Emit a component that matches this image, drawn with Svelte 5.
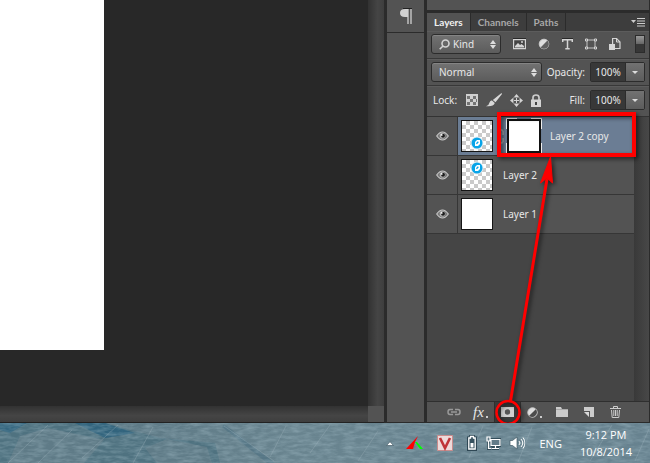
<script>
  let kind = $state('Kind');
  let mode = $state('Normal');
  let opacity = $state('100%');
  let fill = $state('100%');
  const tabs = ['Layers', 'Channels', 'Paths'];
  const layers = [
    { name: 'Layer 2 copy', art: 22, mask: true },
    { name: 'Layer 2', art: 8, mask: false },
    { name: 'Layer 1', art: null, mask: false }
  ];
</script>

<div class="desktop">
  <main class="app">
    <section class="document" aria-label="Document">
      <div class="view">
        <div class="pasteboard"><div class="paper"></div></div>
        <div class="vbar"></div>
      </div>
      <div class="bottom"><div class="hbar"></div><div class="corner"></div></div>
    </section>

    <aside class="dock">
      <button class="paragraph" aria-label="Paragraph">
        <svg width="12" height="17" viewBox="0 0 12 17"><path d="M11 1v15M8 1v15" stroke="#c8c8c8" stroke-width="1.4" /><path d="M12 1H5Q0 1 0 5t5 4h3V1z" fill="#d2d2d2" /><path d="M3 .5h9" stroke="#222" /></svg>
      </button>
    </aside>

    <section class="panel">
      <div class="above"></div>
      <div class="tabs" role="tablist">
        {#each tabs as tab, i}
          <button role="tab" aria-selected={i === 0} class:active={i === 0}>{tab}</button>
        {/each}
        <button class="menu" aria-label="Panel menu">
          <svg width="14" height="9" viewBox="0 0 14 9"><path d="M0 2h5L2.500 5z" fill="#ccc" /><path d="M6 .5h8M6 3h8M6 5.500h8M6 8h8" stroke="#ccc" /></svg>
        </button>
      </div>

      <div class="row filter">
        <div class="pick kind">
          <svg class="search" width="11" height="11" viewBox="0 0 11 11" fill="none" stroke="#d4d4d4" stroke-width="1.600"><circle cx="6.500" cy="4.500" r="3.500" /><path d="M4 7 .7 10.300" /></svg>
          <select bind:value={kind} aria-label="Filter type"><option>Kind</option><option>Name</option></select>
          <svg class="updown" width="6" height="9" viewBox="0 0 6 9"><path d="M0 4h6L3 0zM0 5h6L3 9z" fill="#ddd" /></svg>
        </div>
        <div class="filters">
          <button aria-label="Pixel layers"><svg width="13" height="12" viewBox="0 0 13 12"><path d="M0 .5h13" stroke="#292929" /><path d="M.6 1.600h11.800v9H.6z" fill="#444" stroke="#d4d4d4" stroke-width="1.200" /><path d="M2 9.500V8l3-3 2 2 1.500-1L11 8v1.500z" fill="#d4d4d4" /><circle cx="9" cy="4" r="1" fill="#d4d4d4" /></svg></button>
          <button aria-label="Adjustment layers"><svg width="12" height="12" viewBox="0 0 12 12"><circle cx="6" cy="6" r="4.800" fill="#dedede" stroke="#ccc" /><path d="M2.600 9.400 9.400 2.600A4.800 4.800 0 0 1 2.600 9.400z" fill="#606060" /></svg></button>
          <button aria-label="Type layers"><svg width="11" height="12" viewBox="0 0 11 12"><path d="M.7 4V1.700h9.600V4M5.500 1.700v9M3.300 10.800h4.400" stroke="#d4d4d4" stroke-width="1.500" fill="none" /><path d="M0 .5h11" stroke="#292929" /></svg></button>
          <button aria-label="Shape layers"><svg width="12" height="12" viewBox="0 0 12 12"><path d="M2 2h8v8H2z" fill="none" stroke="#c4c4c4" /><path d="M.5 1h2v2h-2zM9.500 1h2v2h-2zM.5 9h2v2h-2zM9.500 9h2v2h-2z" fill="#555" stroke="#d4d4d4" /></svg></button>
          <button aria-label="Smart objects"><svg width="12" height="13" viewBox="0 0 12 13"><path d="M3.600 8V1.500h4L11 5v6.500H6" fill="none" stroke="#d4d4d4" stroke-width="1.200" /><path d="M7.500 1.500V5H11" fill="none" stroke="#d4d4d4" /><path d="M0 7h6v6H0z" fill="#d4d4d4" /></svg></button>
        </div>
        <button class="toggle" aria-label="Layer filtering"><span></span></button>
      </div>

      <div class="row blend">
        <div class="pick mode">
          <select bind:value={mode} aria-label="Blend mode"><option>Normal</option><option>Multiply</option></select>
          <svg class="updown" width="6" height="9" viewBox="0 0 6 9"><path d="M0 4h6L3 0zM0 5h6L3 9z" fill="#ddd" /></svg>
        </div>
        <label for="opacity">Opacity:</label>
        <div class="amount"><input id="opacity" bind:value={opacity} /><button aria-label="Opacity slider"><svg width="6" height="3" viewBox="0 0 6 3"><path d="M0 0h6L3 3z" fill="#ddd" /></svg></button></div>
      </div>

      <div class="row lock">
        <span>Lock:</span>
        <div class="locks">
          <button aria-label="Lock transparent pixels"><svg width="12" height="12" viewBox="0 0 12 12"><path d="M0 0h12v12H0z" fill="#d0d0d0" /><path d="M1 2h3v3H1zM7 2h3v3H7zM4 5h3v3H4zM1 8h3v3H1zM7 8h3v3H7zM10 5h1v3h-1z" fill="#747474" /></svg></button>
          <button aria-label="Lock image pixels"><svg width="16" height="14" viewBox="0 0 16 14"><path d="M15.500 0 16 1 9.500 9.200 6.800 7zM6 7.500 8.800 10Q7.500 14 0 13.200 3 12.500 3.500 9.500 4.500 7 6 7.500z" fill="#d8d8d8" /></svg></button>
          <button aria-label="Lock position"><svg width="13" height="13" viewBox="0 0 13 13"><path d="M6.500 1v11M1 6.500h11" stroke="#d4d4d4" /><path d="M3.500 3.500h6v6h-6z" fill="none" stroke="#8d8d8d" /><path d="M6.500 0 9 3H4zM6.500 13 4 10h5zM0 6.500 3 4v5zM13 6.500 10 9V4z" fill="#d4d4d4" /></svg></button>
          <button aria-label="Lock all"><svg width="10" height="13" viewBox="0 0 10 13"><path d="M2 6V3.500Q2 1 5 1t3 2.500V6" fill="none" stroke="#ccc" stroke-width="1.700" /><path d="M0 5.500h10V13H0z" fill="#d4d4d4" /><path d="M4 8h2v3H4z" fill="#444" /></svg></button>
        </div>
        <label for="fill">Fill:</label>
        <div class="amount"><input id="fill" bind:value={fill} /><button aria-label="Fill slider"><svg width="6" height="3" viewBox="0 0 6 3"><path d="M0 0h6L3 3z" fill="#ddd" /></svg></button></div>
      </div>

      <div class="stack">
        <ul>
          {#each layers as layer}
            <li class:selected={layer.mask}>
              <button class="eye" aria-label="Toggle visibility of {layer.name}">
                <svg width="13" height="10" viewBox="0 0 13 10"><path d="M.7 5Q3.500 1 6.500 1t5.800 4Q9.500 9 6.500 9T.7 5z" fill="#777" stroke="#c8c8c8" stroke-width="1.200" /><circle cx="6.500" cy="4.800" r="2.800" fill="#b8b8b8" /><circle cx="7" cy="4.800" r="2" fill="#1c1c1c" /><circle cx="5.700" cy="3.900" r=".9" fill="#fff" /></svg>
              </button>
              <button class="layer">
                <span class="thumb" class:clear={layer.art !== null}>
                  {#if layer.art !== null}
                    <svg width="30" height="30" viewBox="0 0 30 30"><g transform="translate(15 {layer.art})"><circle r="6.500" fill="#e6eef2" /><circle r="5.500" fill="#08a4e8" /><path d="M-2 2V-1L0-3H3V1L1 3H-2z" fill="#fff" /><path d="M-.6.8 1.300-1.200" stroke="#08a4e8" stroke-width="1.300" /></g></svg>
                  {/if}
                </span>
                {#if layer.mask}
                  <svg class="chain" width="9" height="15" viewBox="0 0 9 15" fill="none" stroke="#a7a9ac" stroke-width="1.500"><path d="M2 6V2.500L3 1h3l1 1.500V6M2 9v3.500L3 14h3l1-1.500V9M4.500 4v7" /></svg>
                  <span class="maskframe">
                    <svg width="36" height="36" viewBox="0 0 36 36"><path d="M2 2h32v32H2z" fill="#fff" stroke="#111" stroke-width="2" /><path d="M.5 11V.5H11M25 .5h10.500V11M35.500 25v10.500H25M11 35.500H.5V25" fill="none" stroke="#eee" /></svg>
                  </span>
                {/if}
                <span class="name">{layer.name}</span>
              </button>
            </li>
          {/each}
        </ul>
        <div class="track"></div>
      </div>

      <div class="actions">
        <button aria-label="Link layers"><svg width="14" height="8" viewBox="0 0 14 8" fill="none" stroke="#999" stroke-width="1.500"><path d="M6 1.500H3Q1 1.500 1 4t2 2.500h3M8 1.500h3q2 0 2 2.500t-2 2.500H8M4 4h6" /></svg></button>
        <button class="fx" aria-label="Layer style">fx<i></i></button>
        <button class="on" aria-label="Add layer mask"><svg width="13" height="10" viewBox="0 0 13 10"><path d="M0 0h13v10H0z" fill="#d0d0d0" /><circle cx="6.500" cy="5" r="2.700" fill="#555" /></svg></button>
        <button aria-label="Adjustment layer"><svg width="11" height="11" viewBox="0 0 11 11"><circle cx="5.500" cy="5.500" r="4.700" fill="#dedede" stroke="#ccc" /><path d="M2.200 8.800 8.800 2.200A4.700 4.700 0 0 1 2.200 8.800z" fill="#4c4c4c" /></svg><i></i></button>
        <button aria-label="New group"><svg width="12" height="10" viewBox="0 0 12 10"><path d="M0 0h5l1 2h6v8H0z" fill="#ccc" /><path d="M0 2.500h12" stroke="#aaa" /></svg></button>
        <button aria-label="New layer"><svg width="10" height="10" viewBox="0 0 10 10"><path d="M0 0h10v10H6V4H0z" fill="#ccc" /><path d="M0 5h5v5z" fill="#d8d8d8" /></svg></button>
        <button aria-label="Delete layer"><svg width="11" height="12" viewBox="0 0 11 12" fill="none" stroke="#ccc"><path d="M0 2.500h11M3.500 2V.5h4V2M1.500 4l.7 7.500h6.600L9.500 4M3.800 4v6M5.500 4v6M7.200 4v6" /></svg></button>
      </div>

      <svg class="callout" width="150" height="320" viewBox="0 0 150 320">
        <g fill="none" stroke="#f00" stroke-width="3">
          <path d="M9 9h135v41H9z" stroke-width="4" />
          <circle cx="18" cy="307.500" r="11.500" stroke-width="2.500" />
          <path d="M20.500 296 57 74" />
        </g>
        <path d="M60.500 52 62.500 78 57 73 50.500 78z" fill="#f00" stroke="#f00" />
      </svg>
    </section>
  </main>

  <footer class="taskbar">
    <svg class="scenery" viewBox="0 0 650 40" preserveAspectRatio="none" aria-hidden="true">
      <defs>
        <filter id="ice" x="0" y="0" width="100%" height="100%" color-interpolation-filters="sRGB"><feTurbulence type="fractalNoise" baseFrequency=".09 .3" numOctaves="3" seed="8" /><feColorMatrix values="0 0 0 0 .66  0 0 0 0 .76  0 0 0 0 .8  1.800 0 0 0 -.6" /></filter>
      </defs>
      <path d="M0 0h105l55 15 55 5 5 20H0z" fill="#4f7280" />
      <path d="M0 0h27L10 10 0 7zM75 0h30l30 10-30 5z" fill="#32647d" />
      <path d="M20 13 48 5l56 12-20 23H8zM145 25l22-9 40 8 5 16h-55z" fill="#5f7b87" />
      <path d="M224 1 275 40h-8L222 4z" fill="#577786" />
      <path d="M0 0h650v40H0z" filter="url(#ice)" opacity=".4" />
      <path d="M8 40 48 2M38 40 72 7M82 35 118 2M133 40l20-36M270 34 286 3M310 30l20-28M358 38l20-30M469 35l14-32M518 39l14-35M590 38l22-36M635 38l14-32M224 3l50 35" stroke="#a5b8c1" opacity=".3" />
    </svg>
    <button class="expand" aria-label="Show hidden icons"><svg width="8" height="5" viewBox="0 0 8 5"><path d="M.5 4.500 4 .7l3.500 3.800z" fill="#fff" stroke="#455b67" stroke-width=".7" /></svg></button>
    <button class="paint" aria-label="Graphics tools"><svg width="17" height="14" viewBox="0 0 17 14"><path d="M0 13 12 0 9 6 7 13z" fill="#f00" /><path d="M9 6h2l6 7h-3z" fill="#0f0" /></svg></button>
    <button class="v" aria-label="Keyboard layout"><svg width="16" height="16" viewBox="0 0 16 16"><path d="M.5.5h15v15H.5z" fill="#eedada" stroke="#c98c8c" /><path d="m3 3 5 10 5-10" fill="none" stroke="#c03438" stroke-width="2.600" /></svg></button>
    <button class="battery" aria-label="Battery"><svg width="10" height="16" viewBox="0 0 10 16"><path d="M3 1h4v1.500h2V15H1V2.500h2z" fill="#36515e" stroke="#2f4855" stroke-width="2" /><path d="M3.500 1.500h3V3H8.200v11H1.800V3h1.700z" fill="#36515e" stroke="#fff" stroke-width="1.300" /><path d="M3.500 8h3v4.500h-3z" fill="#fff" /></svg></button>
    <button class="network" aria-label="Network"><svg width="15" height="14" viewBox="0 0 15 14"><path d="M5 3.500h9v6H5zM6 12.500h7M9.500 10v2M2.500 5v7.500h3" fill="none" stroke="#334d5a" stroke-width="3" /><path d="M5 3.500h9v6H5zM6 12.500h7M9.500 10v2M2.500 5v7.500h3M1 1h3v4H1z" fill="#627b88" stroke="#fff" stroke-width="1.200" /></svg></button>
    <button class="sound" aria-label="Volume"><svg width="16" height="14" viewBox="0 0 16 14"><path d="M1 4.500h2.500L8 1v12L3.500 9.500H1z" fill="#fff" stroke="#405965" stroke-width=".7" /><path d="M10 5q2 2 0 4M12 3q3.500 4 0 8M14 1.500q4 5.500 0 11" fill="none" stroke="#fff" /></svg></button>
    <button class="lang">ENG</button>
    <button class="clock"><span>9:12 PM</span><span>10/8/2014</span></button>
  </footer>
</div>

<style>
  :global(body) { margin: 0; }
  .desktop { min-height: 100vh; display: flex; flex-direction: column; font: 10px/14px "Noto Sans", "Open Sans", sans-serif; color: #e8e8e8; }
  .desktop * { box-sizing: border-box; }
  button, input, select { font: inherit; color: inherit; margin: 0; padding: 0; border: 0; background: none; border-radius: 0; }
  button { display: flex; align-items: center; justify-content: center; }
  svg { display: block; flex: none; }
  .app { flex: 1; display: flex; background: #535353; }
  .document { flex: 1; min-width: 0; display: flex; flex-direction: column; border-bottom: 1px solid #222; }
  .view { flex: 1; display: flex; }
  .pasteboard { flex: 1; background: #282828; }
  .paper { width: 104px; height: 350px; background: #fff; }
  .vbar { width: 16px; background: linear-gradient(90deg, #323232, #454545 60%, #3e3e3e); }
  .bottom { display: flex; height: 16px; }
  .hbar { flex: 1; background: linear-gradient(#323232, #454545 60%, #3e3e3e); }
  .corner { width: 16px; background: #535353; }
  .dock { width: 41px; border: solid #2b2b2b; border-width: 0 1px 1px 3px; }
  .paragraph { width: 100%; height: 33px; border-bottom: 1px solid #2b2b2b; }
  .panel { width: 225px; position: relative; display: flex; flex-direction: column; border: solid #2b2b2b; border-width: 0 1px 1px 2px; }
  .above { height: 13px; border-bottom: 3px solid #2b2b2b; }
  .tabs { display: flex; height: 18px; background: #3d3d3d; color: #a8a8a8; font-family: Lato, sans-serif; font-weight: 700; }
  .tabs button { padding: 0 7px; border-right: 1px solid #2b2b2b; }
  .tabs .active { background: #535353; color: #f0f0f0; }
  .tabs .menu { margin-left: auto; padding: 0 4px; border: 0; }
  .row { display: flex; align-items: center; padding: 0 4px; height: 27px; border-bottom: 1px solid #383838; box-shadow: inset 0 1px #5c5c5c; }
  .row.filter { height: 28px; padding-bottom: 2px; }
  .row.lock { height: 31px; padding-bottom: 2px; border-bottom: 1px solid #333; }
  .pick { position: relative; height: 20px; border: 1px solid #2c2c2c; border-radius: 3px; background: linear-gradient(#727272, #5c5c5c); box-shadow: inset 0 1px #848484; }
  .pick select { appearance: none; width: 100%; height: 18px; padding-left: 7px; }
  .pick option { background: #535353; }
  .kind { width: 70px; }
  .kind select { padding-left: 21px; }
  .mode { width: 111px; }
  .search { position: absolute; left: 7px; top: 4px; pointer-events: none; }
  .updown { position: absolute; right: 4px; top: 5px; pointer-events: none; }
  .filters { display: flex; gap: 12px; margin-left: 12px; }
  .toggle { width: 10px; height: 18px; margin-left: auto; border: 1px solid #2c2c2c; background: #373737; align-items: flex-start; }
  .toggle span { width: 8px; height: 8px; background: linear-gradient(#999, #666); }
  .row label { margin-left: auto; padding-right: 5px; }
  .amount { display: flex; width: 55px; height: 20px; border: 1px solid #2c2c2c; border-radius: 2px; }
  .amount input { width: 34px; background: #383838; text-align: center; }
  .amount button { flex: 1; border-left: 1px solid #2c2c2c; background: linear-gradient(#727272, #5c5c5c); }
  .lock > span { padding-left: 2px; }
  .locks { display: flex; align-items: center; gap: 8px; margin-left: 9px; }
  .stack { flex: 1; display: flex; background: #454545; }
  ul { flex: 1; list-style: none; margin: 0; padding: 0; }
  li { display: flex; height: 39px; background: #535353; border-bottom: 1px solid #363636; }
  .eye { width: 31px; border-right: 1px solid #363636; }
  .layer { flex: 1; justify-content: flex-start; padding-left: 3px; text-align: left; }
  .selected .layer { background: #6b7d94; }
  .thumb { width: 32px; height: 32px; border: 1px solid #151515; background: #fff; }
  .clear { background: repeating-conic-gradient(#cacaca 0 25%, #fff 0 50%) 0 0 / 8px 8px; }
  .name { margin-left: 10px; }
  .chain { margin-left: 3px; }
  .maskframe { margin-left: 1px; }
  .selected .name { margin-left: 8px; }
  .track { width: 15px; background: linear-gradient(90deg, #393939, #484848); }
  .actions { display: flex; align-items: center; height: 21px; padding: 0 13px; border-top: 1px solid #2f2f2f; background: #535353; }
  .actions button { width: 27px; height: 20px; }
  .actions .on { background: #3b3b3b; border: solid #303030; border-width: 0 1px; }
  .actions i { width: 2px; height: 2px; margin: 10px 0 0 2px; background: #ccc; }
  .actions .fx { font: italic 15px/16px "Liberation Serif", serif; }
  .callout { position: absolute; right: 9px; bottom: -3px; pointer-events: none; filter: drop-shadow(2px 2px 2px #0009); }
  .taskbar { position: relative; height: 40px; display: flex; align-items: center; justify-content: flex-end; background: linear-gradient(90deg, #54717e, #69848f 45%, #67828f); font: 11px/17px "Open Sans", sans-serif; color: #fff; }
  .taskbar button { position: relative; }
  .scenery { position: absolute; inset: 0; width: 100%; height: 100%; }
  .paint { margin-left: 12px; }
  .v { margin-left: 14px; }
  .battery { margin-left: 14px; }
  .network { margin-left: 9px; }
  .sound { margin-left: 8px; }
  .lang { margin-left: 14px; }
  .clock { flex-direction: column; margin: 0 18px 0 18px; }
</style>
